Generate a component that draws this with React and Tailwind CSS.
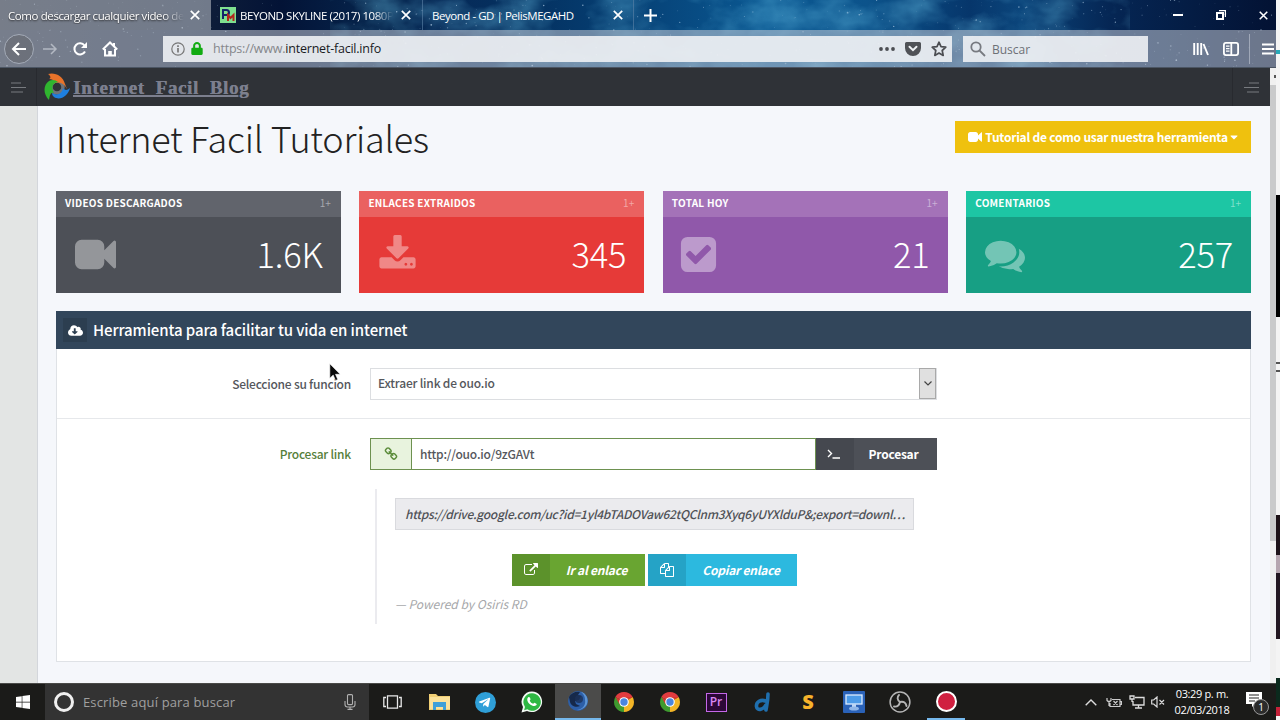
import React from "react";
import { FaCloudDownloadAlt, FaTelegramPlane, FaWindows, FaLock, FaCaretDown } from "react-icons/fa";

const SANS = "font-['Noto_Sans_CJK_SC','Noto_Sans',sans-serif]";
const UI = "font-['Open_Sans','Noto_Sans',sans-serif]";

const PATHS = {
  video:
    "M1792 352v1088q0 42-39 59-13 5-25 5-27 0-45-19l-403-403v166q0 119-84.5 203.5t-203.5 84.5h-704q-119 0-203.5-84.5t-84.5-203.5v-704q0-119 84.5-203.5t203.5-84.5h704q119 0 203.5 84.5t84.5 203.5v165l403-402q18-19 45-19 12 0 25 5 39 17 39 59z",
  download:
    "M1344 1344q0-26-19-45t-45-19-45 19-19 45 19 45 45 19 45-19 19-45zm256 0q0-26-19-45t-45-19-45 19-19 45 19 45 45 19 45-19 19-45zm128-224v320q0 40-28 68t-68 28h-1472q-40 0-68-28t-28-68v-320q0-40 28-68t68-28h465l135 136q58 56 136 56t136-56l136-136h464q40 0 68 28t28 68zm-325-569q17 41-14 70l-448 448q-18 19-45 19t-45-19l-448-448q-31-29-14-70 17-39 59-39h256v-448q0-26 19-45t45-19h256q26 0 45 19t19 45v448h256q42 0 59 39z",
  check:
    "M813 1299l614-614q19-19 19-45t-19-45l-102-102q-19-19-45-19t-45 19l-467 467-211-211q-19-19-45-19t-45 19l-102 102q-19 19-19 45t19 45l358 358q19 19 45 19t45-19zm851-883v960q0 119-84.5 203.5t-203.5 84.5h-960q-119 0-203.5-84.5t-84.5-203.5v-960q0-119 84.5-203.5t203.5-84.5h960q119 0 203.5 84.5t84.5 203.5z",
  comments:
    "M1408 768q0 139-94 257t-256.5 186.5-353.5 68.5q-86 0-176-16-124 88-278 128-36 9-86 16h-3q-11 0-20.5-8t-11.5-21q-1-3-1-6.5t.5-6.5 2-6l2.500-5 3.500-5.500 4-5 4.500-5 4-4.500q5-6 23-25t26-29.500 22.500-29 25-38.500 20.500-44q-124-72-195-177t-71-224q0-139 94-257t256.500-186.500 353.500-68.500 353.500 68.500 256.500 186.500 94 257zm384 256q0 120-71 224.500t-195 176.500q10 24 20.500 44t25 38.500 22.500 29 26 29.500 23 25q1 1 4 4.500t4.500 5 4 5 3.500 5.500l2.500 5 2 6 .5 6.500-1 6.500q-3 14-13 22t-22 7q-50-7-86-16-154-40-278-128-90 16-176 16-271 0-472-132 58 4 88 4 161 0 309-45t264-129q125-92 192-212t67-254q0-77-23-152 129 71 204 178t75 230z",
  link:
    "M1520 1216q0-40-28-68l-208-208q-28-28-68-28-42 0-72 32 3 3 19 18.500t21.500 21.500 15 19 13 25.500 3.500 27.500q0 40-28 68t-68 28q-15 0-27.500-3.500t-25.500-13-19-15-21.500-21.500-18.500-19q-33 31-33 73 0 40 28 68l206 207q27 27 68 27 40 0 68-26l147-146q28-28 28-67zm-703-705q0-40-28-68l-206-207q-28-28-68-28-39 0-68 27l-147 146q-28 28-28 67 0 40 28 68l208 208q27 27 68 27 42 0 72-31-3-3-19-18.500t-21.500-21.500-15-19-13-25.500-3.500-27.500q0-40 28-68t68-28q15 0 27.500 3.500t25.500 13 19 15 21.500 21.500 18.500 19q33-31 33-73zm895 705q0 120-85 203l-147 146q-83 83-203 83-121 0-204-85l-206-207q-83-83-83-203 0-123 88-209l-88-88q-86 88-208 88-120 0-204-84l-208-208q-84-84-84-204t85-203l147-146q83-83 203-83 121 0 204 85l206 207q83 83 83 203 0 123-88 209l88 88q86-88 208-88 120 0 204 84l208 208q84 84 84 204z",
  copy:
    "M1696 384q40 0 68 28t28 68v1216q0 40-28 68t-68 28h-960q-40 0-68-28t-28-68v-288h-544q-40 0-68-28t-28-68v-672q0-40 20-88t48-76l408-408q28-28 76-48t88-20h416q40 0 68 28t28 68v328q68-40 128-40h416zm-544 213l-299 299h299v-299zm-640-384l-299 299h299v-299zm196 647l316-316v-416h-384v416q0 40-28 68t-68 28h-416v640h512v-256q0-40 20-88t48-76zm956 804v-1152h-384v416q0 40-28 68t-68 28h-416v640h896z",
  external:
    "M1408 928v320q0 119-84.500 203.500t-203.500 84.500h-832q-119 0-203.500-84.500t-84.500-203.500v-832q0-119 84.500-203.500t203.500-84.500h704q14 0 23 9t9 23v64q0 14-9 23t-23 9h-704q-66 0-113 47t-47 113v832q0 66 47 113t113 47h832q66 0 113-47t47-113v-320q0-14 9-23t23-9h64q14 0 23 9t9 23zm384-864v512q0 26-19 45t-45 19-45-19l-176-176-652 652q-10 10-23 10t-23-10l-114-114q-10-10-10-23t10-23l652-652-176-176q-19-19-19-45t19-45 45-19h512q26 0 45 19t19 45z",
};

function Glyph({ name, className }) {
  return (
    <svg viewBox="0 0 1792 1792" className={className} fill="currentColor">
      <path d={PATHS[name]} />
    </svg>
  );
}

function makeStars(count) {
  let seed = 7;
  const rnd = () => {
    seed = (seed * 16807) % 2147483647;
    return seed / 2147483647;
  };
  return Array.from({ length: count }, () => ({
    x: rnd() * 1276,
    y: rnd() * 68,
    r: 0.3 + rnd() * rnd() * 0.7,
    o: 0.2 + rnd() * 0.5,
  }));
}
const STARS = makeStars(620);

function Sky() {
  return (
    <svg className="absolute inset-0 h-full w-full" viewBox="0 0 1276 68" preserveAspectRatio="none">
      <defs>
        <linearGradient id="sky">
          <stop offset="0" stopColor="#1c2436" />
          <stop offset="0.15" stopColor="#101f3a" />
          <stop offset="0.22" stopColor="#031336" />
          <stop offset="0.3" stopColor="#06264e" />
          <stop offset="0.35" stopColor="#062a58" />
          <stop offset="0.42" stopColor="#043262" />
          <stop offset="0.52" stopColor="#07467c" />
          <stop offset="0.6" stopColor="#0a5892" />
          <stop offset="0.68" stopColor="#0c538b" />
          <stop offset="0.76" stopColor="#06366b" />
          <stop offset="0.8" stopColor="#0b457b" />
          <stop offset="0.87" stopColor="#052654" />
          <stop offset="1" stopColor="#031233" />
        </linearGradient>
        <filter id="haze" x="0" y="0" width="1" height="1">
          <feTurbulence type="fractalNoise" baseFrequency="0.02 0.03" numOctaves="4" seed="5" />
          <feColorMatrix values="0 0 0 0 0.15  0 0 0 0 0.55  0 0 0 0 0.8  1.6 0 0 0 -0.6" />
        </filter>
      </defs>
      <rect width="1276" height="68" fill="url(#sky)" />
      <rect x="330" width="800" height="68" filter="url(#haze)" opacity="0.5" />
      {STARS.map((s, i) => (
        <circle key={i} cx={s.x} cy={s.y} r={s.r} fill="#cfe6fa" opacity={s.o} />
      ))}
    </svg>
  );
}

function Cross({ className }) {
  return (
    <svg viewBox="0 0 10 10" className={className} stroke="currentColor" strokeWidth="1.7" fill="none">
      <path d="M.8.8l8.400 8.400M9.200.8L.8 9.200" />
    </svg>
  );
}

function TabBar() {
  return (
    <div className="flex h-[30px] items-stretch text-white">
      <div className="flex w-[211px] items-center bg-[#b4b9c2]/60 pl-[8px] pr-[10px]">
        <span className="w-[176px] whitespace-nowrap pt-px text-[11.5px] tracking-[-0.4px] [mask-image:linear-gradient(90deg,#000_88%,transparent)] [text-shadow:0_1px_2px_#222]">
          Como descargar cualquier video de
        </span>
        <Cross className="ml-[6px] h-[10px] w-[10px] shrink-0" />
      </div>
      <div className="flex w-[212px] items-center border-r border-[#5d83a8]/60 pl-[9px] pr-[10px]">
        <svg viewBox="0 0 16 16" className="h-4 w-4 shrink-0">
          <rect width="16" height="16" fill="#7fe08f" />
          <path d="M3 12V3h3.500q2.500 0 2.500 2.500T6.500 8H4" fill="none" stroke="#14246b" strokeWidth="2" />
          <path d="M8 14V8l2.500 3L13.500 8v6" fill="none" stroke="#b3261e" strokeWidth="2" />
        </svg>
        <span className="ml-[4px] w-[153px] whitespace-nowrap pt-px text-[11.5px] tracking-[-0.45px] [mask-image:linear-gradient(90deg,#000_88%,transparent)]">
          BEYOND SKYLINE (2017) 1080P
        </span>
        <Cross className="ml-[8px] h-[10px] w-[10px] shrink-0" />
      </div>
      <div className="flex w-[211px] items-center border-r border-[#5d83a8]/60 pl-[9px] pr-[10px]">
        <span className="w-[176px] whitespace-nowrap pt-px text-[11.5px] tracking-[-0.46px]">Beyond - GD | PelisMEGAHD</span>
        <Cross className="ml-[5px] h-[10px] w-[10px] shrink-0" />
      </div>
      <div className="flex flex-1 items-center justify-between pl-[10px] pr-[8px]">
        <svg viewBox="0 0 13 13" className="h-[13px] w-[13px]" stroke="currentColor" strokeWidth="2">
          <path d="M6.500 0v13M0 6.500h13" />
        </svg>
        <div className="flex items-center gap-[33px]">
          <svg viewBox="0 0 10 10" className="h-[10px] w-[10px]" stroke="currentColor" strokeWidth="2">
            <path d="M0 5h10" />
          </svg>
          <svg viewBox="0 0 10 10" className="h-[10px] w-[10px]" stroke="currentColor" fill="none">
            <path d="M1 3h6v6H1z" strokeWidth="2" />
            <path d="M3 .6h6.400V7" strokeWidth="1.200" />
          </svg>
          <Cross className="h-[9px] w-[9px]" />
        </div>
      </div>
    </div>
  );
}

function ToolBar() {
  return (
    <div className="flex h-[38px] items-center border-b border-[#4b5563] bg-[#c3c9d4]/55 text-white">
      <div className="ml-[4px] flex h-[30px] w-[30px] shrink-0 items-center justify-center rounded-full border border-[#a4abb8] bg-[#6b7079]/90">
        <svg viewBox="0 0 16 16" className="h-4 w-4" fill="none" stroke="currentColor" strokeWidth="2">
          <path d="M15 8H2M8 2L2 8l6 6" />
        </svg>
      </div>
      <svg viewBox="0 0 16 16" className="ml-[8px] h-4 w-4 shrink-0 text-[#b3b8c2]" fill="none" stroke="currentColor" strokeWidth="1.500">
        <path d="M1 8h13M9 3l5 5-5 5" />
      </svg>
      <svg viewBox="0 0 16 16" className="ml-[14px] h-4 w-4 shrink-0" fill="none" stroke="currentColor" strokeWidth="2">
        <path d="M13 10.500A5.600 5.600 0 1 1 12.500 4.500" />
        <path d="M15 1v6H9z" fill="currentColor" stroke="none" />
      </svg>
      <svg viewBox="0 0 16 16" className="ml-[14px] h-4 w-4 shrink-0" fill="none" stroke="currentColor" strokeWidth="2">
        <path d="M.8 8.500L8 1.500l7.200 7M3 8v6.500h10V8" />
        <path d="M6.200 15v-5h3.600v5z" fill="currentColor" stroke="none" />
        <path d="M12 2v3" />
      </svg>
      <div className="ml-[45px] flex h-[26px] w-[789px] shrink-0 items-center bg-[#eef1f4]/90 pl-[8px] pr-[5px] text-[#4b4d52]">
        <svg viewBox="0 0 14 14" className="h-[14px] w-[14px] text-[#777]" fill="none" stroke="currentColor" strokeWidth="1.200">
          <circle cx="7" cy="7" r="6.200" />
          <path d="M7 6v4.500M7 3.300v1.600" strokeWidth="1.700" />
        </svg>
        <FaLock className="ml-[6px] h-[13px] w-[12px] text-[#12ab12]" />
        <span className="ml-[10px] flex-1 whitespace-nowrap pt-[2px] text-[12.5px] tracking-[-0.22px] text-[#85878b]">
          https://www.<span className="text-[#191b1f]">internet-facil.info</span>
        </span>
        <svg viewBox="0 0 16 4" className="h-1 w-4" fill="currentColor">
          <circle cx="2" cy="2" r="1.900" />
          <circle cx="8" cy="2" r="1.900" />
          <circle cx="14" cy="2" r="1.900" />
        </svg>
        <svg viewBox="0 0 16 14" className="ml-[10px] h-[14px] w-4">
          <path d="M1.500 0h13A1.500 1.500 0 0 1 16 1.500V6A8 8 0 0 1 0 6V1.500A1.500 1.500 0 0 1 1.500 0z" fill="#4f5257" />
          <path d="M4.500 4.800L8 8.200l3.500-3.400" fill="none" stroke="#eef1f4" strokeWidth="2" strokeLinecap="round" />
        </svg>
        <svg viewBox="0 0 16 16" className="ml-[10px] h-4 w-4" fill="none" stroke="currentColor" strokeWidth="1.700" strokeLinejoin="round">
          <path d="M8 1.200l2 4.500 4.800.5-3.600 3.300 1 4.900L8 12l-4.200 2.400 1-4.900L1.200 6.200 6 5.700z" />
        </svg>
      </div>
      <div className="ml-[11px] flex h-[26px] w-[185px] shrink-0 items-center bg-[#eef1f4]/90 pl-[7px]">
        <svg viewBox="0 0 16 16" className="h-4 w-4 text-[#777a80]" fill="none" stroke="currentColor" strokeWidth="1.800">
          <circle cx="6" cy="6" r="4.700" />
          <path d="M9.500 9.500L15 15" />
        </svg>
        <span className="ml-[6px] pt-[2px] text-[12px] text-[#6d7076]">Buscar</span>
      </div>
      <svg viewBox="0 0 16 14" className="ml-[45px] h-[14px] w-4 shrink-0" stroke="currentColor" strokeWidth="1.900">
        <path d="M1.200 1v12M4.700 1v12M8.200 1v12M10.500 2l4.500 11" />
      </svg>
      <svg viewBox="0 0 16 14" className="ml-[14px] h-[14px] w-4 shrink-0" fill="none" stroke="currentColor" strokeWidth="1.800">
        <rect x=".9" y=".9" width="14.200" height="12.200" rx="2" />
        <path d="M8.300 1v12" />
        <path d="M3 4.200h3.500M3 6.700h3.500M3 9.200h3.500" strokeWidth="1.200" />
      </svg>
      <div className="ml-[10px] h-[30px] w-px shrink-0 bg-[#b6bdca]/70" />
      <svg viewBox="0 0 12 12" className="ml-[12px] h-3 w-3 shrink-0" stroke="currentColor" strokeWidth="2">
        <path d="M0 1.500h12M0 6h12M0 10.500h12" />
      </svg>
    </div>
  );
}

function Logo() {
  return (
    <svg viewBox="0 0 26 28" className="h-7 w-[26px]">
      <circle cx="13" cy="14" r="6" fill="none" stroke="#6f747b" strokeWidth="3.500" />
      <path d="M4 1c7-2 15 2 17 10l2 5c-3-6-8-8-14-5 2-3 0-5-4-5 2-1 2-3-1-5z" fill="#e8732a" />
      <path d="M5 27C-1 21-1 12 5 8c3-2 7-1 9 1-6 1-7 6-4 11-3-1-4 1-5 7z" fill="#2fb52f" />
      <path d="M26 15c-2 8-10 13-16 9-1-1-2-2-2-4 5 3 10 1 11-5 1 2 4 3 7 0z" fill="#1e7fe0" />
    </svg>
  );
}

function NavBar() {
  return (
    <div className="flex h-[38px] items-stretch bg-[#2f3237]">
      <div className="flex w-[37px] items-center justify-center border-r border-[#282a2f] text-[#787b80]">
        <svg viewBox="0 0 15 11" className="h-[11px] w-[15px]" stroke="currentColor" strokeWidth="1.200">
          <path d="M0 1h10M0 5.500h15M0 10h12" />
        </svg>
      </div>
      <div className="flex flex-1 items-center pl-[7px]">
        <Logo />
        <span className="ml-[3px] mt-[2px] whitespace-pre font-['Liberation_Serif',serif] text-[19px] font-bold leading-6 tracking-[0.65px] text-[#7c7f8e] underline decoration-2 underline-offset-1 [text-shadow:0.4px_0_0_#7c7f8e]">
          Internet  Facil  Blog
        </span>
      </div>
      <div className="flex w-[38px] items-center justify-center border-l border-[#282a2f] text-[#787b80]">
        <svg viewBox="0 0 15 11" className="h-[11px] w-[15px]" stroke="currentColor" strokeWidth="1.200">
          <path d="M5 1h10M0 5.500h15M3 10h12" />
        </svg>
      </div>
    </div>
  );
}

const CARDS = [
  { title: "VIDEOS DESCARGADOS", value: "1.6K", icon: "video", head: "bg-[#61646c]", body: "bg-[#4d5057]", ic: "ml-[19px] h-[41px] w-[41px]" },
  { title: "ENLACES EXTRAIDOS", value: "345", icon: "download", head: "bg-[#ea6160]", body: "bg-[#e63a38]", ic: "ml-[19px] h-[39px] w-[39px]" },
  { title: "TOTAL HOY", value: "21", icon: "check", head: "bg-[#a472b8]", body: "bg-[#9058aa]", ic: "ml-[15px] h-[41px] w-[41px]" },
  { title: "COMENTARIOS", value: "257", icon: "comments", head: "bg-[#1dc6a4]", body: "bg-[#179f84]", ic: "ml-[19px] h-[40px] w-[40px]" },
];

function StatCard({ card }) {
  return (
    <div className={"flex h-[102px] flex-1 flex-col text-white " + card.body}>
      <div className={"flex h-[26px] items-center justify-between pb-[2px] pl-[9px] pr-[10px] text-[10px] leading-none " + card.head}>
        <span className="font-bold tracking-[0.25px]">{card.title}</span>
        <span className="text-white/45">1+</span>
      </div>
      <div className="flex flex-1 items-center justify-between pb-px pr-[18px]">
        <Glyph name={card.icon} className={"text-white/40 " + card.ic} />
        <span className="pb-[2px] text-[34.5px] font-light leading-none tracking-[-0.2px]">{card.value}</span>
      </div>
    </div>
  );
}

function ToolPanel() {
  return (
    <div className="mt-[18px] flex h-[351px] flex-col border-x border-b border-[#dfe2e6] bg-white text-[12px] text-[#55575c]">
      <div className="-mx-px flex h-[38px] items-center bg-[#32465b] pl-[7px] text-white">
        <div className="flex h-6 w-6 items-center justify-center bg-[#2c3e50]">
          <FaCloudDownloadAlt className="h-[13px] w-[15px]" />
        </div>
        <span className="ml-[6px] pb-[2px] text-[15px] font-medium leading-none tracking-[-0.1px]">Herramienta para facilitar tu vida en internet</span>
      </div>
      <div className="flex h-[70px] items-center border-b border-[#e6e8eb]">
        <span className="w-[294px] text-right font-medium tracking-[-0.24px]">Seleccione su funcion</span>
        <div className="ml-[19px] flex h-8 w-[567px] items-center justify-between border border-[#dcdee1] pl-[7px]">
          <span className="pb-px font-medium tracking-[-0.2px]">Extraer link de ouo.io</span>
          <div className="flex h-[31px] w-[17px] items-center justify-center border border-[#a9a9a9] bg-[#e0e0e0]">
            <svg viewBox="0 0 8 5" className="h-[5px] w-2" fill="none" stroke="#444" strokeWidth="1.200">
              <path d="M.5.5L4 4 7.500.5" />
            </svg>
          </div>
        </div>
      </div>
      <div className="flex h-[70px] items-center">
        <span className="w-[294px] text-right font-medium tracking-[-0.23px] text-[#56803a]">Procesar link</span>
        <div className="ml-[19px] flex h-8 w-[567px]">
          <div className="flex w-[42px] items-center justify-center border border-[#6d9150] bg-[#e8f3de] text-[#5b8c3a]">
            <Glyph name="link" className="h-[14px] w-[14px]" />
          </div>
          <div className="flex flex-1 items-center border-y border-r border-[#6d9150] pb-px pl-[8px] font-medium tracking-[-0.2px]">http://ouo.io/9zGAVt</div>
          <div className="flex w-[121px] bg-[#4d5057] text-white">
            <div className="flex w-[38px] items-center justify-center bg-[#45484f] pr-[3px]">
              <svg viewBox="0 0 13 10" className="h-[10px] w-[13px]" fill="none" stroke="currentColor" strokeWidth="1.400">
                <path d="M1 1l3.500 3.500L1 8M5.500 9H13" />
              </svg>
            </div>
            <span className="flex flex-1 items-center justify-center pb-px pr-[4px] font-bold tracking-[-0.25px]">Procesar</span>
          </div>
        </div>
      </div>
      <div className="ml-[318px] flex h-[135px] w-[562px] flex-col border-l-2 border-[#ebebef] pl-[18px] italic">
        <div className="mt-[9px] flex h-8 w-[519px] items-center border border-[#d9dade] bg-[#ebebee] pb-px pl-[9px] font-medium text-[#505257]">
          <span className="whitespace-nowrap tracking-[-0.285px]">https://drive.google.com/uc?id=1yl4bTADOVaw62tQClnm3Xyq6yUYXlduP&amp;;export=downl…</span>
        </div>
        <div className="mt-6 flex h-8 gap-[3px] pl-[117px] font-bold tracking-[-0.22px] text-white">
          <div className="flex w-[133px] bg-[#69a531]">
            <div className="flex w-[38px] items-center justify-center bg-[#5c922b]">
              <Glyph name="external" className="h-[14px] w-[14px]" />
            </div>
            <span className="flex flex-1 items-center justify-center pb-px pr-[2px]">Ir al enlace</span>
          </div>
          <div className="flex w-[149px] bg-[#2cb9df]">
            <div className="flex w-[38px] items-center justify-center bg-[#25a3c6]">
              <Glyph name="copy" className="h-[14px] w-[14px]" />
            </div>
            <span className="flex flex-1 items-center justify-center pb-px pr-px">Copiar enlace</span>
          </div>
        </div>
        <span className="mt-[9px] leading-[18px] text-[#a6a7aa]">— Powered by Osiris RD</span>
      </div>
    </div>
  );
}

function Page() {
  return (
    <div className="flex min-h-0 flex-1">
      <div className="flex w-[1270px] flex-col">
        <NavBar />
        <div className="flex flex-1">
          <div className="w-[38px] border-r border-[#d3d6db] bg-[#e3e5e4]" />
          <div className={"flex-1 bg-[#f5f7fb] pl-[18px] pr-[19px] pt-[15px] " + SANS}>
            <div className="flex h-[70px] items-start justify-between">
              <h1 className="-mt-[3px] text-[36px] font-light leading-[38px] tracking-[-0.28px] text-[#222]">Internet Facil Tutoriales</h1>
              <div className="flex h-8 w-[296px] items-center justify-center whitespace-nowrap bg-[#efc10e] text-[12px] font-bold tracking-[-0.23px] text-white">
                <Glyph name="video" className="mr-[3px] h-[14px] w-[14px]" />
                Tutorial de como usar nuestra herramienta
                <FaCaretDown className="ml-[2px] h-[12px] w-[8px]" />
              </div>
            </div>
            <div className="flex gap-[18.6px]">
              {CARDS.map((c) => (
                <StatCard key={c.title} card={c} />
              ))}
            </div>
            <ToolPanel />
          </div>
        </div>
      </div>
      <div className="flex w-[6px] flex-col bg-[#f0f0f0]">
        <div className="flex h-[17px] items-center justify-end">
          <div className="h-[3px] w-[2px] bg-[#555]" />
        </div>
        <div className="h-[456px] bg-[#c9cacb]" />
      </div>
    </div>
  );
}

function Chrome() {
  return (
    <svg viewBox="0 0 20 20" className="h-5 w-5">
      <path d="M10 10L1.340 5A10 10 0 0 1 18.660 5z" fill="#e23b3f" />
      <path d="M10 10L18.660 5A10 10 0 0 1 10 20z" fill="#f3b526" />
      <path d="M10 10v10A10 10 0 0 1 1.340 5z" fill="#3f9b2f" />
      <path d="M1.340 5L5.700 12.500 10 10zM18.700 5H10v5z" fill="#d8362f" />
      <circle cx="10" cy="10" r="4.800" fill="#fff" />
      <circle cx="10" cy="10" r="3.700" fill="#4a86e0" />
    </svg>
  );
}

function Slot({ children, className = "w-[46px]" }) {
  return <div className={"flex shrink-0 items-center justify-center " + className}>{children}</div>;
}

function TaskBar() {
  return (
    <div className={"flex h-[37px] items-stretch border-t border-[#4a4a48] bg-[#1b1b19] text-white " + UI}>
      <div className="flex w-[45px] items-center justify-center">
        <FaWindows className="h-4 w-4" />
      </div>
      <div className="flex w-[324px] items-center bg-[#333333] pl-[9px] pr-[13px]">
        <div className="h-5 w-5 rounded-full border-[3px] border-[#f0f0f0]" />
        <span className="ml-[9px] flex-1 pt-px text-[13px] tracking-[0.15px] text-[#a0a0a0]">Escribe aquí para buscar</span>
        <svg viewBox="0 0 12 16" className="h-4 w-3" fill="none" stroke="#b0b0b0" strokeWidth="1.100">
          <rect x="3.500" y=".6" width="5" height="10" rx="1" />
          <path d="M1 7v3.500Q1 13 3.500 13h5Q11 13 11 10.500V7M6 13v2.400M3.500 15.400h5" />
        </svg>
      </div>
      <Slot>
        <svg viewBox="0 0 19 14" className="h-[14px] w-[19px]" fill="none" stroke="#e8e8e8" strokeWidth="1.300">
          <path d="M4.500.8h10v12.400h-10zM3 2.500H.8v9H3M16 2.500h2.200v9H16" />
        </svg>
      </Slot>
      <Slot className="ml-px w-[46px]">
        <svg viewBox="0 0 21 18" className="h-[18px] w-[21px]">
          <path d="M0 1h7l2 2h12v14H0z" fill="#f1cf74" />
          <path d="M1 4h20v12H1z" fill="#fbe29a" />
          <path d="M4 9h13v8h-3v-3H7v3H4z" fill="#3fa0d8" />
        </svg>
      </Slot>
      <Slot>
        <div className="flex h-[21px] w-[21px] items-center justify-center rounded-full bg-[#2f9fd8] pr-[2px]">
          <FaTelegramPlane className="h-[13px] w-[13px]" />
        </div>
      </Slot>
      <Slot className="w-[47px]">
        <svg viewBox="0 0 22 22" className="h-[22px] w-[22px]">
          <path d="M11 .5a10.300 10.300 0 1 1-5 19.400L.5 21.500 2 16A10.300 10.300 0 0 1 11 .5z" fill="#f4fbf5" />
          <path d="M11 2.300a8.700 8.700 0 1 1-4.600 16l-3.300.9.900-3.200A8.700 8.700 0 0 1 11 2.300z" fill="#2eb843" />
          <path d="M7.200 6.300c.6-.6 1.300-.5 1.600.2l.7 1.600c.2.500-.8 1.300-.7 1.600.6 1.400 1.900 2.600 3.300 3.100.4.100 1-1.200 1.500-1l1.700.9c.6.300.5 1-.1 1.600-1 1-2.600 1-4.200.2-2-.9-3.800-2.700-4.500-4.600-.5-1.500-.2-2.800.7-3.600z" fill="#fff" />
        </svg>
      </Slot>
      <Slot className="w-[46px] border-b-2 border-[#76b9ed] bg-[#4b4b4a]">
        <svg viewBox="0 0 22 22" className="h-[22px] w-[22px]">
          <circle cx="11" cy="11" r="10" fill="#2d5fa8" />
          <path d="M2 7c2-4 7-6 11-5l-2 3 3 1-2 4-4 1 1 3 4 2c-4 2-9 0-10-4z" fill="#16294a" />
          <path d="M14 2c5 1 8 7 6 12-2 4-6 6-10 6 6-1 9-5 8-10 0-3-1-6-4-8z" fill="#5f96d4" />
          <circle cx="12" cy="9" r="4" fill="#1c3157" opacity=".8" />
        </svg>
      </Slot>
      <Slot><Chrome /></Slot>
      <Slot><Chrome /></Slot>
      <Slot>
        <div className="flex h-[19px] w-[21px] items-center justify-center border border-[#c468e8] bg-[#2c0838] text-[12px] font-semibold leading-none text-[#d887f2]">Pr</div>
      </Slot>
      <Slot>
        <svg viewBox="0 0 17 20" className="h-5 w-[17px]" fill="none" stroke="#1f6fae" strokeWidth="3.600" strokeLinecap="round">
          <path d="M14 2c0 6-1 10-2 16M11.500 9C7 7 2 10 2.500 14.500 3 19 9 18 11.500 13.500" />
        </svg>
      </Slot>
      <Slot>
        <span className="font-['Open_Sans',sans-serif] text-[20px] font-extrabold leading-none text-[#f7b32b]">S</span>
      </Slot>
      <Slot>
        <svg viewBox="0 0 22 22" className="h-[22px] w-[22px]">
          <rect width="22" height="22" rx="1" fill="#2a62b8" />
          <rect x="3" y="4" width="16" height="9" fill="#4c9be8" stroke="#dcecff" strokeWidth="1.300" />
          <path d="M9 13h4v3H9z" fill="#bcd6f5" />
          <ellipse cx="11" cy="17.500" rx="5" ry="2" fill="#8fb6e8" />
        </svg>
      </Slot>
      <Slot>
        <svg viewBox="0 0 22 22" className="h-[22px] w-[22px]" fill="none" stroke="#b5b5b5">
          <circle cx="11" cy="11" r="9.900" strokeWidth="1.500" />
          <path d="M11 11C8 9 8 6 10 4M11 11c4-1 6 1 6.500 4M11 11c-1 4-3 5-6 4.500" strokeWidth="1.900" strokeLinecap="round" />
        </svg>
      </Slot>
      <Slot>
        <div className="flex h-full w-[38px] items-center justify-center border-b-2 border-[#76b9ed]">
          <div className="h-[21px] w-[21px] rounded-full border-2 border-white bg-[#d02040]" />
        </div>
      </Slot>
      <div className="flex flex-1 items-center pl-[116px]">
        <svg viewBox="0 0 12 7" className="h-[7px] w-3 shrink-0" fill="none" stroke="#ddd" strokeWidth="1.400">
          <path d="M.7 6.300L6 1l5.300 5.300" />
        </svg>
        <svg viewBox="0 0 16 11" className="ml-[9px] h-[11px] w-4 shrink-0" fill="none" stroke="#ccc" strokeWidth="1.200">
          <path d="M6 2.500h8v7H4V6M14.500 4.500h1v3h-1M1 1v2.500q2 2 4 0V1M3 4.500V9M7.500 4l4 4M11.500 4l-4 4" />
        </svg>
        <svg viewBox="0 0 16 14" className="ml-[7px] h-[14px] w-4 shrink-0" fill="none" stroke="#ddd" strokeWidth="1.300">
          <path d="M6 2.500h9v7.500H4V6M9.500 10v3M6 13h7M1 1h4v3H1zM3 4v3" />
        </svg>
        <svg viewBox="0 0 14 12" className="ml-[6px] h-3 w-[14px] shrink-0" fill="none" stroke="#ddd" strokeWidth="1.200">
          <path d="M.7 4h2L6 1v10L2.700 8h-2zM8.500 4l4.500 4.500M13 4L8.500 8.500" />
        </svg>
        <div className="ml-[8px] flex w-[58px] shrink-0 flex-col items-center whitespace-nowrap text-[11px] leading-4 tracking-[-0.35px]">
          <span>03:29 p. m.</span>
          <span>02/03/2018</span>
        </div>
        <div className="relative ml-[15px] h-5 w-6 shrink-0">
          <svg viewBox="0 0 16 15" className="h-[15px] w-4">
            <path d="M0 0h16v12H9l-3 3v-3H0z" fill="#fff" />
            <path d="M3 3h10M3 6h10M3 9h6" stroke="#222" strokeWidth="1.200" />
          </svg>
          <span className="absolute left-[7px] top-[7px] flex h-4 w-4 items-center justify-center rounded-full border border-[#999] bg-[#2b2b2b] text-[10px] leading-none">1</span>
        </div>
      </div>
    </div>
  );
}

function EdgeStrip() {
  return (
    <div className="flex w-1 flex-col bg-[#f4f4f4]">
      <div className="h-[50px]" />
      <div className="h-[4px] bg-[#27a9b8]" />
      <div className="h-[141px]" />
      <div className="h-[122px] bg-black" />
      <div className="h-[45px]" />
      <div className="h-[2px] bg-[#555]" />
      <div className="h-[6px]" />
      <div className="h-[2px] bg-[#555]" />
      <div className="h-[143px]" />
      <div className="h-[40px] bg-[#1d1218]" />
      <div className="h-[18px] bg-[#b5a5ae]" />
      <div className="h-[66px] bg-[#231720]" />
      <div className="h-[39px]" />
      <div className="h-[29px] bg-[#0b2a1d]" />
      <div className="h-[9px] bg-[#c4223a]" />
    </div>
  );
}

export default function App() {
  return (
    <div className="relative flex h-[720px] w-[1280px] overflow-hidden bg-white">
      <div className="flex w-[1276px] flex-col">
        <div className={"relative h-[68px] " + UI}>
          <Sky />
          <div className="relative">
            <TabBar />
            <ToolBar />
          </div>
        </div>
        <Page />
        <TaskBar />
      </div>
      <EdgeStrip />
      <svg viewBox="0 0 12 19" className="absolute left-[329px] top-[363px] h-[19px] w-3">
        <path d="M.8.800v14.500l3.400-3.200L6.500 17.500l2.300-1-2.300-5.200h4.700z" fill="#0a0a0a" stroke="#fff" strokeWidth=".6" />
      </svg>
    </div>
  );
}
